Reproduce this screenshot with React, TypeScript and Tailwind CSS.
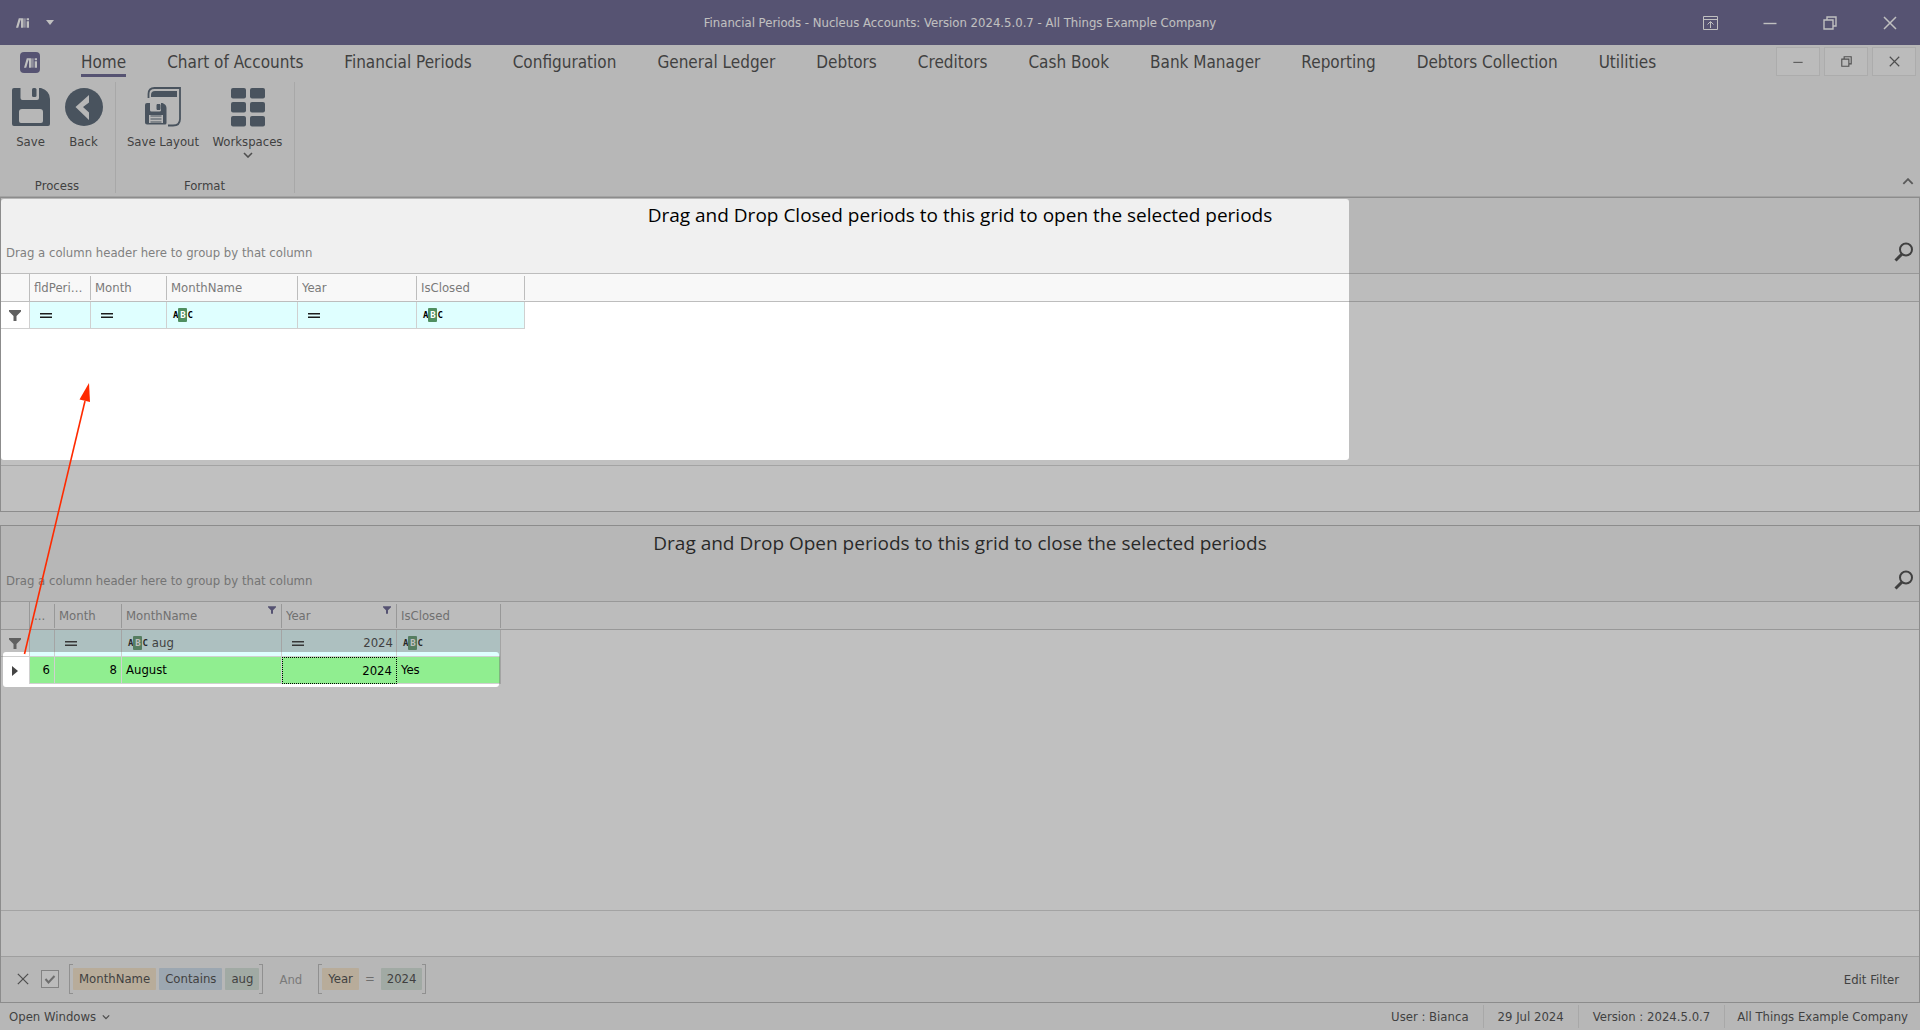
import React from "react";

const TABS = [
  "Home", "Chart of Accounts", "Financial Periods", "Configuration", "General Ledger", "Debtors",
  "Creditors", "Cash Book", "Bank Manager", "Reporting", "Debtors Collection", "Utilities",
];

function Mark({ className }: { className: string }) {
  return (
    <svg viewBox="0 0 14 10" className={className} aria-hidden="true">
      <path d="M3 0h2.4L2.4 10H0zM5 0h2.500v10H5.400V4zM11.500 3H14v7h-2.500zM11.500 0H14v2h-2.500z" fill="#fff" />
      <path d="M7.500 0h3v10h-3z" fill="#fff" opacity=".55" />
    </svg>
  );
}

function Minus({ className }: { className: string }) {
  return (
    <svg viewBox="0 0 14 14" className={className} fill="none" stroke="currentColor" strokeWidth="1.400" aria-hidden="true">
      <path d="M0.500 7.500h13" />
    </svg>
  );
}

function Restore({ className }: { className: string }) {
  return (
    <svg viewBox="0 0 14 14" className={className} fill="none" stroke="currentColor" strokeWidth="1.400" aria-hidden="true">
      <path d="M1 4h9v9H1zM4 4V1h9v9h-3" />
    </svg>
  );
}

function Cross({ className }: { className: string }) {
  return (
    <svg viewBox="0 0 14 14" className={className} fill="none" stroke="currentColor" strokeWidth="1.500" aria-hidden="true">
      <path d="M1 1l12 12M13 1L1 13" />
    </svg>
  );
}

function Chevron({ className }: { className: string }) {
  return (
    <svg viewBox="0 0 10 6" className={className} fill="none" stroke="currentColor" strokeWidth="1.600" aria-hidden="true">
      <path d="M1 1l4 4 4-4" />
    </svg>
  );
}

function Funnel({ className }: { className: string }) {
  return (
    <svg viewBox="0 0 12 11" className={className} fill="currentColor" aria-hidden="true">
      <path d="M0 0h12v1.500L7.500 6v5h-3V6L0 1.500z" />
    </svg>
  );
}

function Equals() {
  return (
    <svg viewBox="0 0 12 5" className="h-[5px] w-3 shrink-0" stroke="#1c1c1c" aria-hidden="true">
      <path d="M0 .7h12M0 4.300h12" strokeWidth="1.400" />
    </svg>
  );
}

function Abc() {
  return (
    <span className="flex shrink-0 items-center font-['DejaVu_Sans_Mono',monospace] text-[9px] leading-[14px] font-bold text-black">
      <span>A</span>
      <span className="w-[9px] rounded-[1px] bg-[#4f8f60] text-center text-white">B</span>
      <span>C</span>
    </span>
  );
}

function SaveIcon() {
  return (
    <svg viewBox="0 0 38 38" className="h-[38px] w-[38px]" aria-hidden="true">
      <path fill="#394a5c" fillRule="evenodd" d="M2 0h6.500v10q0 2 2 2H25q2 0 2-2V0h2q9 3 9 11v25q0 2-2 2H2q-2 0-2-2V2q0-2 2-2zm8 21q-3 0-3 3v9q0 2 2 2h20q2 0 2-2v-9q0-3-3-3z" />
      <rect x="20" y="0" width="4.500" height="9" rx="1.500" fill="#394a5c" />
    </svg>
  );
}

function BackIcon() {
  return (
    <svg viewBox="0 0 38 38" className="h-[38px] w-[38px]" aria-hidden="true">
      <circle cx="19" cy="19" r="19" fill="#394a5c" />
      <path d="M24 7v7.500L18 19l6 5.500V32L10.500 19z" fill="#f1f1f1" />
    </svg>
  );
}

function LayoutIcon() {
  return (
    <svg viewBox="0 0 36 40" className="h-10 w-9" aria-hidden="true">
      <path d="M3.500 11V7q0-6 6-6H35v31q0 6.500-7 6.500h-5" fill="none" stroke="#394a5c" strokeWidth="1.800" />
      <path d="M6 10V8q0-4 4-4h22v6z" fill="#394a5c" />
      <path fillRule="evenodd" fill="#394a5c" d="M2 16h3v7q0 1.500 1.500 1.500h8q1.500 0 1.500-1.500v-7h1.500q4 1.500 4 5v15q0 1.500-1.500 1.500H2q-2 0-2-2V18q0-2 2-2zm2 12v8h14v-8z" />
      <path d="M12 17.500h3v5h-3zM5.500 29h11M5.500 32h11M5.500 35h11" fill="#394a5c" stroke="#394a5c" strokeWidth="1" />
    </svg>
  );
}

function WorkspacesIcon() {
  return (
    <svg viewBox="0 0 34 40" className="h-10 w-[34px]" fill="#394a5c" aria-hidden="true">
      {[0, 14, 28].map((y) => (
        <g key={y}>
          <rect x="0" y={y + 1} width="15" height="10.500" rx="2" />
          <rect x="19" y={y + 1} width="15" height="10.500" rx="2" />
        </g>
      ))}
    </svg>
  );
}

function Magnifier() {
  return (
    <svg viewBox="0 0 20 20" className="h-5 w-5" fill="none" stroke="#2b2b2b" aria-hidden="true">
      <circle cx="12" cy="7.500" r="6" strokeWidth="2" />
      <path d="M8 12l-6.500 6.500" strokeWidth="3" />
    </svg>
  );
}

function ToolButton({ label, icon, width, menu }: { label: string; icon: React.ReactNode; width: string; menu?: boolean }) {
  return (
    <button className={`flex flex-col items-center ${width}`}>
      <span className="flex h-10 items-center">{icon}</span>
      <span className="mt-[5px] leading-5 whitespace-nowrap">{label}</span>
      {menu && <Chevron className="h-[6px] w-[10px] text-[#444]" />}
    </button>
  );
}

type Column = { name: string; width: string; filter: "equals" | "abc" | "none"; value?: string; right?: boolean; filtered?: boolean; cell?: string; focused?: boolean };

function Grid({ title, columns, hasRow, children, className }: { title: string; columns: Column[]; hasRow?: boolean; children?: React.ReactNode; className: string }) {
  return (
    <section className={`flex flex-col border border-[#a8a8a8] bg-white ${className}`}>
      <div className="flex h-[76px] shrink-0 flex-col border-b border-[#bdbdbd] bg-[#f0f0f0]">
        <h2 className="h-[34px] text-center font-['Open_Sans',sans-serif] text-[19px] leading-[34px] text-black">{title}</h2>
        <div className="flex flex-1 items-center justify-between pt-px pr-[5px] pl-[5px]">
          <p className="text-[#808080]">Drag a column header here to group by that column</p>
          <button aria-label="Search" className="pb-[2px]"><Magnifier /></button>
        </div>
      </div>
      <table className="w-full table-fixed border-separate border-spacing-0">
        <colgroup>
          <col className="w-[29px]" />
          {columns.map((c) => <col key={c.name} className={c.width} />)}
          <col />
        </colgroup>
        <thead>
          <tr className="h-[28px] bg-[#f8f8f8] text-left text-[#7a7a7a]">
            <th className="border-r border-b border-[#bdbdbd] p-0" />
            {columns.map((c) => (
              <th key={c.name} className="border-b border-[#bdbdbd] p-0 font-normal">
                <div className="flex h-[24px] justify-between border-r border-[#bdbdbd] pr-[5px] pl-[4px] leading-[24px]">
                  <span className="truncate">{c.name}</span>
                  {c.filtered && <Funnel className="mt-[2px] h-2 w-2 shrink-0 text-[#4e497d]" />}
                </div>
              </th>
            ))}
            <th className="border-b border-[#bdbdbd] p-0" />
          </tr>
        </thead>
        <tbody>
          <tr className="h-[27px]">
            <td className="border-r border-b border-[#d0d0d0] p-0">
              <Funnel className="ml-2 h-[11px] w-3 text-[#606060]" />
            </td>
            {columns.map((c) => (
              <td key={c.name} className="border-r border-b border-[#d0d0d0] bg-[#dfffff] p-0">
                <div className={`flex items-center gap-1 pr-[3px] ${c.filter === "equals" ? "pl-[10px]" : "pl-[6px]"}`}>
                  {c.filter === "equals" && <Equals />}
                  {c.filter === "abc" && <Abc />}
                  <input
                    aria-label={`Filter ${c.name}`}
                    defaultValue={c.value}
                    className={`w-0 min-w-0 flex-1 bg-transparent leading-5 outline-none ${c.right ? "text-right" : ""}`}
                  />
                </div>
              </td>
            ))}
            <td className="p-0" />
          </tr>
          {hasRow && (
            <tr className="h-[27px] text-black">
              <td className="border-r border-[#d0d0d0] p-0">
                <svg viewBox="0 0 6 10" className="ml-[11px] h-[10px] w-[6px]" fill="#444" aria-hidden="true"><path d="M0 0l6 5-6 5z" /></svg>
              </td>
              {columns.map((c) => (
                <td key={c.name} className={`border-b bg-[#90ee90] p-0 ${c.focused ? "border border-dotted border-black" : "border-r border-[#d0d0d0]"}`}>
                  <div className={`px-[4px] leading-5 ${c.right ? "text-right" : ""}`}>{c.cell}</div>
                </td>
              ))}
              <td className="p-0" />
            </tr>
          )}
        </tbody>
      </table>
      <div className="flex-1" />
      <div className="h-[46px] shrink-0 border-t border-[#cfcfcf]" />
      {children}
    </section>
  );
}

const CLOSED: Column[] = [
  { name: "fldPeriodID", width: "w-[61px]", filter: "equals" },
  { name: "Month", width: "w-[76px]", filter: "equals" },
  { name: "MonthName", width: "w-[131px]", filter: "abc" },
  { name: "Year", width: "w-[119px]", filter: "equals" },
  { name: "IsClosed", width: "w-[108px]", filter: "abc" },
];

const OPEN: Column[] = [
  { name: "...", width: "w-[25px]", filter: "none", cell: "6", right: true },
  { name: "Month", width: "w-[67px]", filter: "equals", cell: "8", right: true },
  { name: "MonthName", width: "w-[160px]", filter: "abc", value: "aug", cell: "August", filtered: true },
  { name: "Year", width: "w-[115px]", filter: "equals", value: "2024", cell: "2024", right: true, filtered: true, focused: true },
  { name: "IsClosed", width: "w-[104px]", filter: "abc", cell: "Yes" },
];

function Bracket({ children }: { children: React.ReactNode }) {
  return (
    <div className="flex h-[30px] items-stretch">
      <span className="w-[4px] border-y border-l border-[#b0b0b0]" />
      <span className="flex items-center gap-[3px]">{children}</span>
      <span className="w-[4px] border-y border-r border-[#b0b0b0]" />
    </div>
  );
}

function FilterBar() {
  return (
    <div className="flex h-[46px] shrink-0 items-center border-t border-[#c8c8c8] bg-[#f0f0f0] pr-3 pb-[2px] pl-4 text-[#2b2b2b]">
      <button aria-label="Clear filter"><Cross className="h-3 w-3 text-[#444]" /></button>
      <label className="relative ml-3 flex h-[18px] w-[18px]">
        <input type="checkbox" defaultChecked aria-label="Filter enabled" className="h-[18px] w-[18px] appearance-none border border-[#9a9a9a] bg-[#f8f8f8]" />
        <svg viewBox="0 0 18 18" className="pointer-events-none absolute inset-0" fill="none" stroke="#777" strokeWidth="2" aria-hidden="true"><path d="M4.500 9l3 3.500L13.500 6" /></svg>
      </label>
      <div className="ml-[10px] flex items-center">
        <Bracket>
          <button className="rounded-[1px] bg-[#f2dec0] px-[6px] leading-[22px]">MonthName</button>
          <button className="rounded-[1px] bg-[#c4d5e6] px-[6px] leading-[22px]">Contains</button>
          <button className="rounded-[1px] bg-[#cbdad1] px-[6px] leading-[22px]">aug</button>
        </Bracket>
        <button className="px-4 pt-[2px] text-[#8a8a8a]">And</button>
        <Bracket>
          <button className="rounded-[1px] bg-[#f2dec0] px-[6px] leading-[22px]">Year</button>
          <button className="px-[3px] leading-[22px] text-[#777]">=</button>
          <button className="rounded-[1px] bg-[#cbdad1] px-[6px] leading-[22px]">2024</button>
        </Bracket>
      </div>
      <button className="ml-auto px-2 pt-[2px]">Edit Filter</button>
    </div>
  );
}

function Spotlight() {
  return (
    <svg className="pointer-events-none absolute inset-0 h-full w-full" aria-hidden="true">
      <defs>
        <mask id="spot">
          <rect width="100%" height="100%" fill="#fff" />
          <rect x="1" y="199" width="1348" height="261" rx="3" fill="#000" />
          <rect x="3" y="652" width="496" height="35" rx="3" fill="#000" />
        </mask>
      </defs>
      <rect width="100%" height="100%" fill="#626262" fillOpacity="0.4" mask="url(#spot)" />
      <path d="M24.500 654L85 401" stroke="#ff2a00" strokeWidth="1.600" />
      <path d="M89 383l1 19-10.500-2.500z" fill="#ff2a00" />
    </svg>
  );
}

export default function App() {
  return (
    <div className="relative flex min-h-screen flex-col bg-[#f7f7f7] font-['DejaVu_Sans_Condensed','Open_Sans',sans-serif] text-[13px] text-[#2b2b2b]">
      <header className="grid h-[45px] shrink-0 grid-cols-[1fr_auto_1fr] items-center bg-[#4f4a7d] text-white">
        <div className="flex items-center gap-[17px] pl-4">
          <Mark className="h-[10px] w-[13px]" />
          <button aria-label="Customize toolbar">
            <svg viewBox="0 0 8 5" className="h-[5px] w-2" fill="#fff" aria-hidden="true"><path d="M0 0h8L4 5z" /></svg>
          </button>
        </div>
        <h1>Financial Periods - Nucleus Accounts: Version 2024.5.0.7 - All Things Example Company</h1>
        <div className="flex justify-end">
          <button aria-label="Ribbon display options" className="flex w-[60px] justify-center">
            <svg viewBox="0 0 15 14" className="h-[14px] w-[15px]" fill="none" stroke="currentColor" aria-hidden="true"><path d="M.5.5h14v13H.5zM.5 3.500h14M7.500 12V6M4.500 8.500l3-3 3 3" /></svg>
          </button>
          <button aria-label="Minimize" className="flex w-[60px] justify-center"><Minus className="h-[14px] w-[14px]" /></button>
          <button aria-label="Restore" className="flex w-[60px] justify-center"><Restore className="h-[14px] w-[14px]" /></button>
          <button aria-label="Close" className="flex w-[60px] justify-center"><Cross className="h-[14px] w-[14px]" /></button>
        </div>
      </header>

      <nav className="flex h-[35px] shrink-0 items-start bg-[#f1f1f1] pr-1 pl-5">
        <button aria-label="Application menu" className="mt-[7px] flex h-[21px] w-5 items-center justify-center rounded bg-[#4f4a7d]">
          <Mark className="h-[10px] w-[13px]" />
        </button>
        <div className="ml-[41px] flex gap-[41px] text-[17px]">
          {TABS.map((t, i) => (
            <a key={t} href="#" className={`h-8 border-b-[3px] leading-[35px] whitespace-nowrap ${i === 0 ? "border-[#4f4a7d]" : "border-transparent"}`}>{t}</a>
          ))}
        </div>
        <div className="mt-[2px] ml-auto flex gap-[4px] text-[#444]">
          <button aria-label="Minimize document" className="flex h-[29px] w-11 items-center justify-center border border-[#dedede] bg-[#f7f7f7]"><Minus className="h-[10px] w-[10px]" /></button>
          <button aria-label="Restore document" className="flex h-[29px] w-11 items-center justify-center border border-[#dedede] bg-[#f7f7f7]"><Restore className="h-[11px] w-[11px]" /></button>
          <button aria-label="Close document" className="flex h-[29px] w-11 items-center justify-center border border-[#dedede] bg-[#f7f7f7]"><Cross className="h-[11px] w-[11px]" /></button>
        </div>
      </nav>

      <div className="flex h-[117px] shrink-0 border-b border-[#cfcfcf] bg-[#f1f1f1] pt-[2px] pb-[3px]">
        <div className="flex flex-col justify-between border-r border-[#d8d8d8] pt-[5px] pr-[5px] pl-1">
          <div className="flex">
            <ToolButton label="Save" icon={<SaveIcon />} width="w-[53px]" />
            <ToolButton label="Back" icon={<BackIcon />} width="w-[53px]" />
          </div>
          <span className="text-center leading-[14px]">Process</span>
        </div>
        <div className="flex flex-col justify-between border-r border-[#d8d8d8] pt-[5px] pr-[5px] pl-1">
          <div className="flex">
            <ToolButton label="Save Layout" icon={<LayoutIcon />} width="w-[86px]" />
            <ToolButton label="Workspaces" icon={<WorkspacesIcon />} width="w-[83px]" menu />
          </div>
          <span className="text-center leading-[14px]">Format</span>
        </div>
        <button aria-label="Collapse ribbon" className="mr-[6px] mb-2 ml-auto self-end"><Chevron className="h-[7px] w-3 rotate-180 text-[#555]" /></button>
      </div>

      <main className="flex flex-1 flex-col gap-[13px]">
        <Grid title="Drag and Drop Closed periods to this grid to open the selected periods" columns={CLOSED} className="h-[315px]" />
        <Grid title="Drag and Drop Open periods to this grid to close the selected periods" columns={OPEN} hasRow className="flex-1">
          <FilterBar />
        </Grid>
      </main>

      <footer className="flex h-[27px] shrink-0 items-center justify-between bg-[#f1f1f1] pl-[9px]">
        <button className="flex items-center gap-[6px]">Open Windows <Chevron className="h-[6px] w-2 text-[#444]" /></button>
        <div className="flex leading-[23px]">
          <span className="px-[14px]">User : Bianca</span>
          <span className="border-l border-[#d8d8d8] px-[14px]">29 Jul 2024</span>
          <span className="border-l border-[#d8d8d8] px-[14px]">Version : 2024.5.0.7</span>
          <span className="border-l border-[#d8d8d8] px-[12px]">All Things Example Company</span>
        </div>
      </footer>
      <Spotlight />
    </div>
  );
}
